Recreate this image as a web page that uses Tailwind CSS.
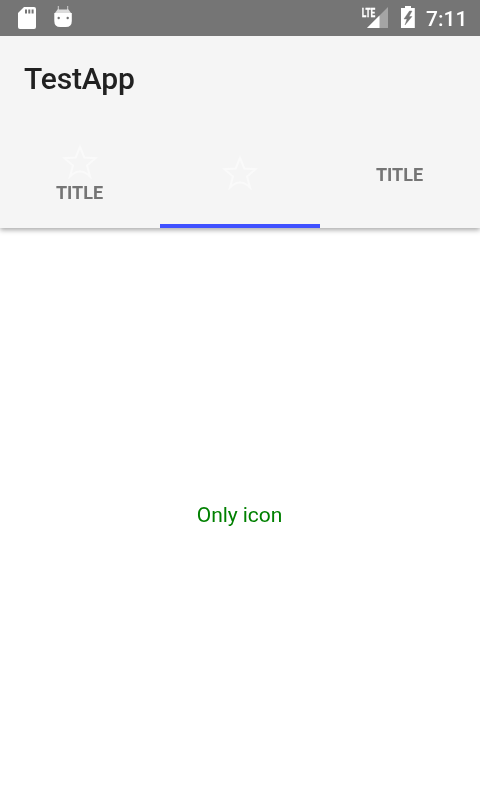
<!DOCTYPE html>
<html lang="en">
<head>
<meta charset="utf-8">
<title>TestApp</title>
<script src="https://cdn.jsdelivr.net/npm/@tailwindcss/browser@4"></script>
</head>
<body class="flex h-screen flex-col overflow-hidden bg-white font-['Roboto',sans-serif]">
  <div class="relative z-10 flex h-9 shrink-0 items-center justify-between bg-[#757575] text-white">
    <svg class="h-9 w-[90px]" viewBox="0 0 90 36" fill="#fff">
      <path d="M24 7h10a2 2 0 0 1 2 2v18a2 2 0 0 1-2 2H20a2 2 0 0 1-2-2V13z"/>
      <path d="M25 9.500h2v4h-2zM28.300 9.500h2v4h-2zM31.600 9.500h2v4h-2z" fill="#757575"/>
      <path d="M58.300 6v4M67.700 6v4" stroke="#fff" stroke-width="1" opacity=".65"/>
      <path d="M57.500 9.500h11l2.500 3.500H55z" opacity=".75"/>
      <path d="M54.300 13h17.500v8q0 6-6 6h-5.500q-6 0-6-6z"/>
      <circle cx="58.700" cy="18" r="1.200" fill="#757575"/><circle cx="67.700" cy="18" r="1.200" fill="#757575"/>
    </svg>
    <div class="flex h-9 items-center will-change-transform">
      <svg class="h-9 w-[70px]" viewBox="356 0 70 36" fill="#fff">
        <path d="M388 7v21h-21z" opacity=".35"/>
        <path d="M379.500 15.500V28H367z"/>
        <path d="M361 6h15v11h-15z" fill="#757575"/>
        <text x="361.800" y="16.500" font-size="13" font-weight="700" stroke="#fff" stroke-width=".3" textLength="13.500" lengthAdjust="spacingAndGlyphs">LTE</text>
        <path d="M405 6h6v2h3.800v20h-13.800V8h4z"/>
        <path d="M409.500 11l-5.500 8h3l-2 6 7-8.500h-3l3-5.500z" fill="#757575" stroke="#757575" stroke-width=".4"/>
      </svg>
      <span class="w-[54px] pt-0.5 text-[21px] leading-9 font-medium">7:11</span>
    </div>
  </div>
  <header class="relative h-48 shrink-0 bg-[#f5f5f5] shadow-[0_2px_5px_rgba(0,0,0,0.35)]">
    <h1 class="h-[84px] pl-6 text-[30px] leading-[86px] font-medium tracking-[-0.15px] text-[#212121] will-change-transform">TestApp</h1>
    <nav class="grid h-[108px] grid-cols-3 text-[18px] font-bold text-[#757575] will-change-transform">
      <div class="flex flex-col items-center pt-[23px]">
        <svg class="h-9 w-9" viewBox="0 0 36 36" fill="none" stroke="#fafafa" stroke-width="2"><path d="M18 4L22.300 14.500L33.500 15.200L25 22.500L28 33.500Q18 23.500 8 33.500L11 22.500L2.500 15.200L13.700 14.500Z"/></svg>
        <span class="mt-0.5 mr-px leading-[24px]">TITLE</span>
      </div>
      <div class="flex flex-col items-center border-b-4 border-[#3f51ff] pt-[34px]">
        <svg class="h-9 w-9" viewBox="0 0 36 36" fill="none" stroke="#fafafa" stroke-width="2"><path d="M18 4L22.300 14.500L33.500 15.200L25 22.500L28 33.500Q18 23.500 8 33.500L11 22.500L2.500 15.200L13.700 14.500Z"/></svg>
      </div>
      <div class="flex justify-center pt-[43px]"><span class="mr-px leading-[24px]">TITLE</span></div>
    </nav>
  </header>
  <main class="flex flex-1 items-center justify-center pt-1 text-[21px] text-[#008000] will-change-transform"><span class="mr-px tracking-[-0.05px]">Only icon</span></main>
</body>
</html>
